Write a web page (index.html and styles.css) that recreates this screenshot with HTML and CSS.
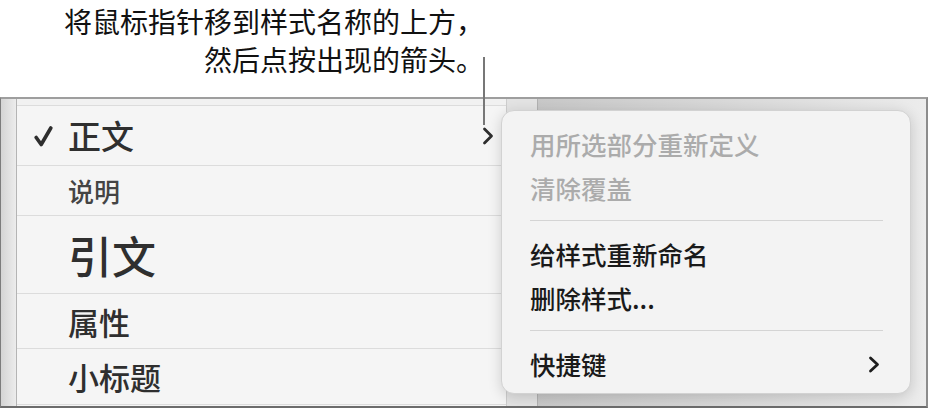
FILE: index.html
```html
<!DOCTYPE html>
<html lang="zh-CN">
  <head>
    <meta charset="UTF-8" />
    <meta name="viewport" content="width=device-width, initial-scale=1.0" />
    <link rel="stylesheet" href="styles.css">
  </head>
  <body>
    <div class="page">
      <div class="note">
        <p>将鼠标指针移到样式名称的上方，<br />然后点按出现的箭头。</p>
      </div>

      <div class="window">
        <div class="gutter"></div>

        <div class="styles">
          <div class="row row-cut"></div>
          <div class="row row-body">
            <span class="tick">
              <svg width="19" height="22" viewBox="0 0 19 22">
                <path d="M2.2 12.5 L7.2 19.5 L16.8 3" fill="none" stroke="#2e2e2e" stroke-width="3.6" stroke-linecap="round" stroke-linejoin="round" />
              </svg>
            </span>
            <span class="name">正文</span>
            <svg class="more" width="12" height="18" viewBox="0 0 12 18">
              <path d="M2.5 2 L9.5 9 L2.5 16" fill="none" stroke="#2e2e2e" stroke-width="2.8" stroke-linecap="round" stroke-linejoin="round" />
            </svg>
          </div>
          <div class="row row-caption"><span class="tick"></span><span class="name">说明</span></div>
          <div class="row row-quote"><span class="tick"></span><span class="name">引文</span></div>
          <div class="row row-attr"><span class="tick"></span><span class="name">属性</span></div>
          <div class="row row-sub"><span class="tick"></span><span class="name">小标题</span></div>
          <div class="row row-end"></div>
        </div>

        <div class="divider"></div>
        <div class="canvas"></div>

        <div class="menu">
          <div class="item off">用所选部分重新定义</div>
          <div class="item off">清除覆盖</div>
          <div class="sep"></div>
          <div class="item">给样式重新命名</div>
          <div class="item">删除样式...</div>
          <div class="sep"></div>
          <div class="item">
            快捷键
            <svg class="more" width="12" height="17" viewBox="0 0 12 17">
              <path d="M2.5 2 L9.5 8.5 L2.5 15" fill="none" stroke="#1d1d1d" stroke-width="2.8" stroke-linecap="round" stroke-linejoin="round" />
            </svg>
          </div>
        </div>
      </div>

      <span class="leader"></span>
    </div>
  </body>
</html>
```

FILE: styles.css
```css
body {
  margin: 0;
  background-color: #ffffff;
  font-family: "Noto Sans CJK SC", "Noto Sans", sans-serif;
  font-weight: 500;
  color: #161616;
}
.page {
  position: relative;
  width: 928px;
  height: 410px;
}

/* callout */
.note {
  height: 97px;
}
.note p {
  margin: 0;
  padding-top: 2px;
  width: 484px;
  text-align: right;
  font-size: 28px;
  font-weight: 400;
  line-height: 38px;
  color: #111111;
}
.leader {
  position: absolute;
  left: 483px;
  top: 57px;
  width: 2px;
  height: 68px;
  background-color: #777777;
}

/* window frame */
.window {
  position: relative;
  display: flex;
  height: 311px;
  box-sizing: border-box;
  border-top: 2px solid #9e9e9e;
  border-left: 1px solid #7c7c7c;
  border-right: 2px solid #8c8c8c;
  border-bottom: 2px solid #6c6c6c;
}
.gutter {
  width: 15px;
  border-right: 1px solid #b4b4b4;
  background: linear-gradient(90deg, #d4d4d4, #ececec);
}
.styles {
  width: 489px;
  display: flex;
  flex-direction: column;
  background-color: #f5f5f5;
}
.divider {
  width: 30px;
  border-left: 1px solid #cdcdcd;
  border-right: 1px solid #b2b2b2;
  background-color: #e3e3e3;
}
.canvas {
  flex: 1;
  background: linear-gradient(90deg, #c8c8c8, #dddddd 60%, #ececec);
}

/* style rows */
.row {
  display: flex;
  align-items: center;
  box-sizing: border-box;
  padding-left: 17px;
  padding-right: 12px;
  border-top: 1px solid #dcdcdc;
  color: #2f2f2f;
}
.row-cut {
  height: 6px;
  border-top: none;
  background-color: #f1f1f1;
}
.row-end {
  flex: 1;
}
.tick {
  display: flex;
  align-items: center;
  width: 34px;
  flex-shrink: 0;
}
.name {
  line-height: 1;
}
.row .more {
  margin-left: auto;
}
.row-body {
  height: 60px;
  font-size: 33px;
}
.row-caption {
  height: 50px;
  font-size: 26px;
  color: #444444;
}
.row-quote {
  height: 78px;
  font-size: 44px;
}
.row-attr {
  height: 55px;
  font-size: 31px;
}
.row-sub {
  height: 56px;
  font-size: 31px;
}

/* popup menu */
.menu {
  position: absolute;
  left: 500px;
  top: 11px;
  width: 410px;
  height: 284px;
  box-sizing: border-box;
  padding: 11px 0 9px;
  border: 1px solid #d2d2d2;
  border-radius: 13px;
  background-color: #f3f3f3;
  box-shadow: 0 3px 14px rgba(0, 0, 0, 0.16);
}
.item {
  display: flex;
  align-items: center;
  height: 44px;
  padding: 0 30px 0 28px;
  font-size: 25.5px;
  line-height: 1;
  color: #1a1a1a;
}
.item.off {
  color: #ababab;
}
.item .more {
  margin-left: auto;
}
.sep {
  height: 1px;
  margin: 10px 27px 11px 28px;
  background-color: #d4d4d4;
}
```
